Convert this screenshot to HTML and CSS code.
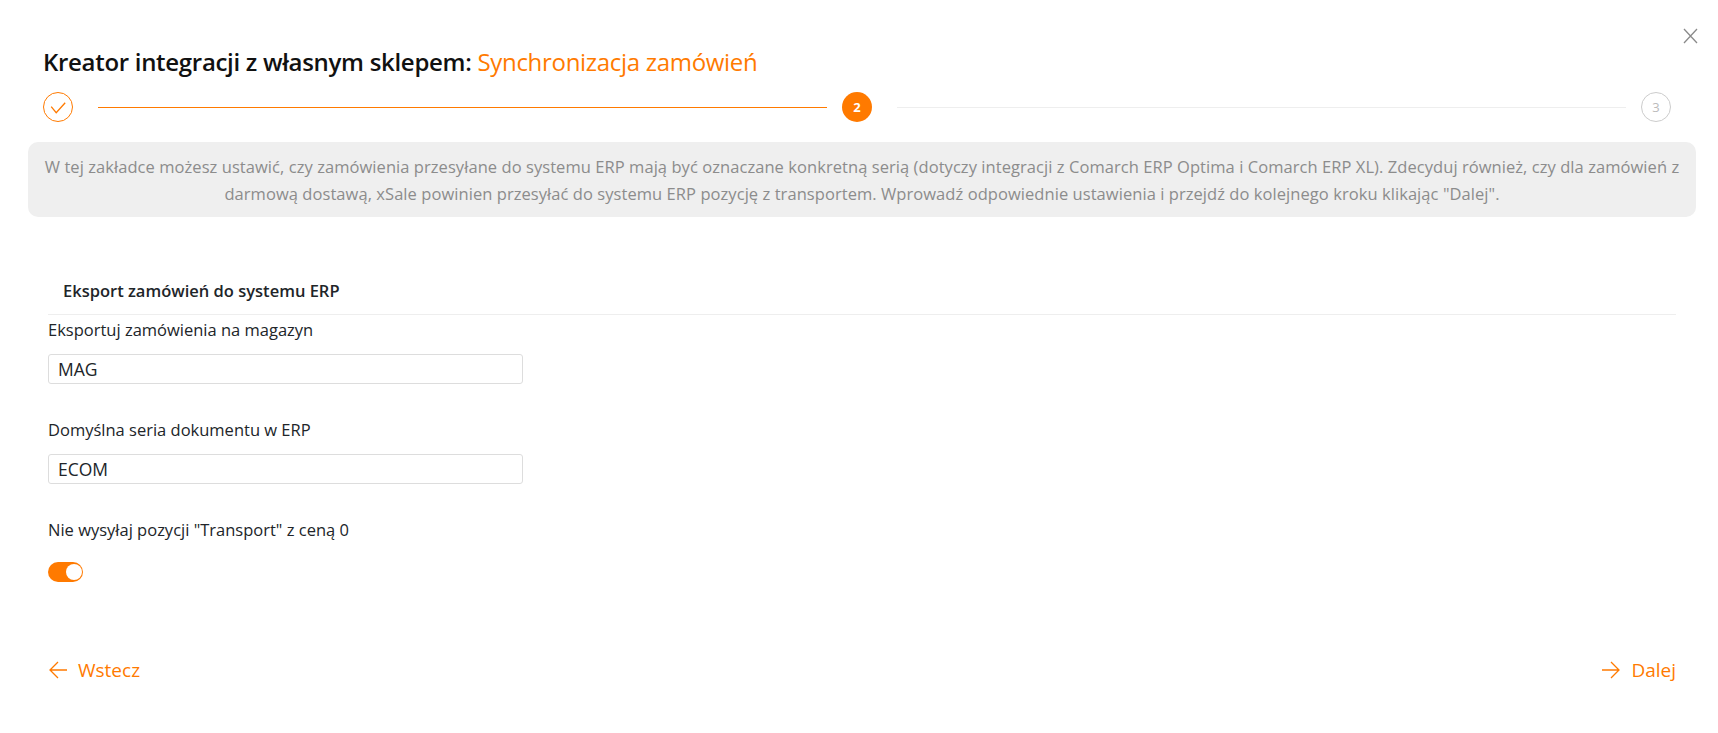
FILE: index.html
```html
<!DOCTYPE html>
<html lang="pl">
<head>
    <meta charset="UTF-8">
    <meta name="viewport" content="width=device-width, initial-scale=1.0">
    <title>Kreator integracji</title>
    <link rel="stylesheet" href="styles.css">
</head>
<body>
    <div class="modal">
        <button class="close" aria-label="Zamknij">
            <svg width="16" height="16" viewBox="0 0 16 16"><path d="M2 1 L15 15 M15 1 L2 15" stroke="#8a8a8a" stroke-width="1.3" fill="none"/></svg>
        </button>
        <h1 class="title">Kreator integracji z własnym sklepem: <span class="accent">Synchronizacja zamówień</span></h1>
        <div class="steps">
            <div class="step done">
                <svg width="16" height="16" viewBox="0 0 16 16"><path d="M1.2 7.7 L6.2 13.7 L15.2 3.7" stroke="#ff7a00" stroke-width="1.3" fill="none"/></svg>
            </div>
            <div class="line active"></div>
            <div class="step current">2</div>
            <div class="line"></div>
            <div class="step todo">3</div>
        </div>
        <div class="info">
            W tej zakładce możesz ustawić, czy zamówienia przesyłane do systemu ERP mają być oznaczane konkretną serią (dotyczy integracji z Comarch ERP Optima i Comarch ERP XL). Zdecyduj również, czy dla zamówień z darmową dostawą, xSale powinien przesyłać do systemu ERP pozycję z transportem. Wprowadź odpowiednie ustawienia i przejdź do kolejnego kroku klikając "Dalej".
        </div>
        <div class="section">
            <h2 class="section-title">Eksport zamówień do systemu ERP</h2>
            <div class="field">
                <label class="label">Eksportuj zamówienia na magazyn</label>
                <input class="input" type="text" value="MAG">
            </div>
            <div class="field">
                <label class="label">Domyślna seria dokumentu w ERP</label>
                <input class="input" type="text" value="ECOM">
            </div>
            <div class="field">
                <label class="label">Nie wysyłaj pozycji "Transport" z ceną 0</label>
                <span class="toggle"><span class="knob"></span></span>
            </div>
        </div>
        <div class="nav">
            <a class="nav-link" href="#">
                <svg width="19" height="18" viewBox="0 0 19 18"><path d="M19 9 H2 M10 1 L2 9 L10 17" stroke="#ff7a00" stroke-width="1.3" fill="none"/></svg>
                Wstecz
            </a>
            <a class="nav-link" href="#">
                <svg width="19" height="18" viewBox="0 0 19 18"><path d="M1 9 H18 M10 1 L18 9 L10 17" stroke="#ff7a00" stroke-width="1.3" fill="none"/></svg>
                Dalej
            </a>
        </div>
    </div>
</body>
</html>
```

FILE: styles.css
```css
* {
    box-sizing: border-box;
}

body {
    margin: 0;
    background-color: #fff;
    font-family: 'Open Sans', sans-serif;
    color: #212529;
}

.modal {
    position: relative;
    padding: 44px 22px 0 28px;
    height: 733px;
    overflow: hidden;
}

.close {
    position: absolute;
    top: 28px;
    right: 20px;
    padding: 0;
    border: 0;
    background: none;
    line-height: 0;
}

.title {
    margin: 0 0 0 15px;
    font-size: 24px;
    font-weight: 600;
    line-height: 36px;
    letter-spacing: -0.3px;
    color: #111;
}

.accent {
    font-weight: 400;
    color: #ff7a00;
}

.steps {
    display: flex;
    align-items: center;
    margin: 12px 25px 0 15px;
    height: 30px;
}

.step {
    display: flex;
    flex: none;
    justify-content: center;
    align-items: center;
    width: 30px;
    height: 30px;
    border-radius: 50%;
    font-size: 13px;
    font-weight: 700;
}

.step.done {
    border: 1px solid #ff7a00;
}

.step.current {
    background-color: #ff7a00;
    color: #fff;
}

.step.todo {
    border: 1px solid #ccc;
    color: #bbb;
    font-weight: 400;
}

.line {
    flex: 1;
    height: 1px;
    margin: 0 15px 0 25px;
    background-color: #eee;
}

.line.active {
    background-color: #ff7a00;
}

.info {
    margin-top: 20px;
    padding: 11px 8px;
    height: 75px;
    border-radius: 10px;
    background-color: #efefef;
    color: #8c8c8c;
    font-size: 16.5px;
    line-height: 27px;
    letter-spacing: 0.06px;
    text-align: center;
}

.section {
    margin: 62px 20px 0 20px;
}

.section-title {
    margin: 0;
    padding: 0 15px 11px;
    border-bottom: 1px solid #eee;
    font-size: 16.5px;
    font-weight: 600;
    line-height: 24px;
}

.field {
    margin-bottom: 31px;
}

.label {
    display: block;
    margin-bottom: 12px;
    padding-top: 3px;
    font-size: 16.5px;
    line-height: 24px;
}

.input {
    display: block;
    width: 475px;
    height: 30px;
    padding: 0 9px;
    border: 1px solid #ddd;
    border-radius: 3px;
    font-family: inherit;
    font-size: 17.5px;
    color: #212529;
}

.toggle {
    display: block;
    position: relative;
    width: 35px;
    height: 20px;
    margin-top: 20px;
    border-radius: 10px;
    background-color: #ff7a00;
}

.knob {
    position: absolute;
    top: 2px;
    right: 1px;
    width: 16px;
    height: 16px;
    border-radius: 50%;
    background-color: #fff;
}

.nav {
    display: flex;
    justify-content: space-between;
    margin: 76px 20px 0 20px;
}

.nav-link {
    display: flex;
    align-items: center;
    gap: 11px;
    color: #ff7a00;
    font-size: 19px;
    line-height: 24px;
    text-decoration: none;
}
```
